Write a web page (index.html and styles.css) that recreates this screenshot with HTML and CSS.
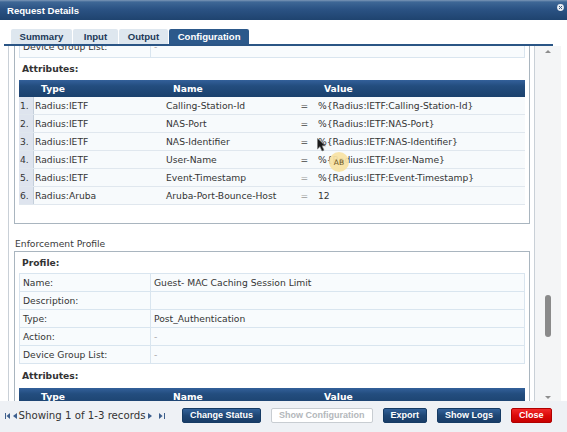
FILE: index.html
```html
<!DOCTYPE html>
<html>
<head>
<meta charset="utf-8">
<link rel="stylesheet" href="styles.css">
</head>
<body>
<div class="dialog">
  <div class="titlebar">
    <span class="title">Request Details</span>
    <svg class="x-icon" width="7" height="7" viewBox="0 0 7 7"><circle cx="3.5" cy="3.5" r="3.4" fill="#e9edf2"/><path d="M2 2 L5 5 M5 2 L2 5" stroke="#3b5a80" stroke-width="1"/></svg>
  </div>
  <div class="tabs">
    <div class="tab">Summary</div>
    <div class="tab tab-narrow">Input</div>
    <div class="tab">Output</div>
    <div class="tab active">Configuration</div>
  </div>
  <div class="main">
    <div class="scroll">
      <div class="scroll-inner">
        <div class="box box-first">
          <div class="kv">
            <div class="kv-row kv-cut"><div class="k">Device Group List:</div><div class="v dim">-</div></div>
          </div>
          <div class="sub">Attributes:</div>
          <div class="attr">
            <div class="attr-head"><span></span><span class="h">Type</span><span class="h">Name</span><span></span><span class="h">Value</span></div>
            <div class="attr-row"><span class="num">1.</span><span class="type">Radius:IETF</span><span class="name">Calling-Station-Id</span><span class="eq">=</span><span class="val">%{Radius:IETF:Calling-Station-Id}</span></div>
            <div class="attr-row"><span class="num">2.</span><span class="type">Radius:IETF</span><span class="name">NAS-Port</span><span class="eq">=</span><span class="val">%{Radius:IETF:NAS-Port}</span></div>
            <div class="attr-row"><span class="num">3.</span><span class="type">Radius:IETF</span><span class="name">NAS-Identifier</span><span class="eq">=</span><span class="val">%{Radius:IETF:NAS-Identifier}</span></div>
            <div class="attr-row"><span class="num">4.</span><span class="type">Radius:IETF</span><span class="name">User-Name</span><span class="eq">=</span><span class="val">%{Radius:IETF:User-Name}</span></div>
            <div class="attr-row"><span class="num">5.</span><span class="type">Radius:IETF</span><span class="name">Event-Timestamp</span><span class="eq light">=</span><span class="val">%{Radius:IETF:Event-Timestamp}</span></div>
            <div class="attr-row"><span class="num">6.</span><span class="type">Radius:Aruba</span><span class="name">Aruba-Port-Bounce-Host</span><span class="eq light">=</span><span class="val">12</span></div>
          </div>
        </div>
        <div class="section-label">Enforcement Profile</div>
        <div class="box">
          <div class="sub sub-profile">Profile:</div>
          <div class="kv kv-top">
            <div class="kv-row"><div class="k">Name:</div><div class="v">Guest- MAC Caching Session Limit</div></div>
            <div class="kv-row"><div class="k">Description:</div><div class="v"></div></div>
            <div class="kv-row"><div class="k">Type:</div><div class="v">Post_Authentication</div></div>
            <div class="kv-row"><div class="k">Action:</div><div class="v dim">-</div></div>
            <div class="kv-row"><div class="k">Device Group List:</div><div class="v dim">-</div></div>
          </div>
          <div class="sub sub-attr">Attributes:</div>
          <div class="attr">
            <div class="attr-head"><span></span><span class="h">Type</span><span class="h">Name</span><span></span><span class="h">Value</span></div>
          </div>
        </div>
      </div>
      <svg class="cursor" width="9" height="14" viewBox="0 0 9 14"><polygon points="0.5,0.5 0.5,11 3,8.6 5,13 7,12.2 5,7.8 8.4,7.8" fill="#1a1a1a" stroke="#777" stroke-width="0.6"/></svg>
      <div class="ab">AB</div>
    </div>
    <div class="vscroll">
      <span class="arrow up"></span>
      <div class="track"><div class="thumb"></div></div>
      <span class="arrow down"></span>
    </div>
  </div>
  <div class="footer">
    <div class="pager">
      <svg class="pg pg-first" width="5" height="6" viewBox="0 0 5 6"><rect x="0" y="0" width="1" height="6" fill="#3d5f8d"/><polygon points="5,0 5,6 1.5,3" fill="#3d5f8d"/></svg>
      <svg class="pg pg-prev" width="4" height="6" viewBox="0 0 4 6"><polygon points="4,0 4,6 0,3" fill="#3d5f8d"/></svg>
      <span class="pg-text">Showing 1 of 1-3 records</span>
      <svg class="pg pg-next" width="4" height="6" viewBox="0 0 4 6"><polygon points="0,0 0,6 4,3" fill="#3d5f8d"/></svg>
      <svg class="pg pg-last" width="6" height="6" viewBox="0 0 6 6"><polygon points="0,0 0,6 3.6,3" fill="#3d5f8d"/><rect x="5" y="0" width="1" height="6" fill="#3d5f8d"/></svg>
    </div>
    <div class="btns">
      <span class="btn">Change Status</span>
      <span class="btn btn-disabled">Show Configuration</span>
      <span class="btn">Export</span>
      <span class="btn">Show Logs</span>
      <span class="btn btn-close">Close</span>
    </div>
  </div>
</div>
</body>
</html>
```

FILE: styles.css
```css
* { box-sizing: border-box; }
html, body { margin: 0; padding: 0; }
body {
  width: 567px;
  height: 432px;
  overflow: hidden;
  background: #fff;
  font-family: "DejaVu Sans", Verdana, sans-serif;
  font-size: 9.2px;
  color: #353535;
}
.dialog { display: flex; flex-direction: column; height: 432px; }

.titlebar {
  height: 20px;
  flex: 0 0 20px;
  display: flex;
  justify-content: space-between;
  align-items: flex-start;
  padding: 0 3px 0 7px;
  background: linear-gradient(to bottom, #7c97b7 0, #3e6796 2px, #2b5384 9px, #1f436f 20px);
}
.title {
  font-family: "Liberation Sans", Arial, sans-serif;
  font-weight: bold;
  font-size: 9.6px;
  color: #fff;
  line-height: 21px;
}
.x-icon { margin-top: 4px; }

.tabs {
  display: flex;
  gap: 1.5px;
  margin: 9px 14px 0 4px;
  padding-left: 7px;
  border-bottom: 2px solid #2a5585;
  flex: 0 0 auto;
}
.tab {
  height: 15px;
  line-height: 15px;
  padding: 0 8.5px;
  background: #dee7ef;
  color: #223a59;
  font-family: "Liberation Sans", Arial, sans-serif;
  font-weight: bold;
  font-size: 9.6px;
  border-radius: 2px 2px 0 0;
}
.tab-narrow { padding: 0 10.5px; }
.tab.active { background: #2c598b; color: #fff; }

.main { display: flex; height: 355px; flex: 0 0 355px; padding-left: 8px; }
.scroll {
  width: 527px;
  border-left: 1px solid #c9d0d7;
  border-right: 1px solid #c9d0d7;
  overflow: hidden;
  position: relative;
}
.scroll-inner { margin-top: -12px; }

.box {
  margin: 0 4px 0 5px;
  border: 1px solid #a9b5bf;
  padding: 0 4px;
}
.box-first { padding-top: 4px; padding-bottom: 18px; }

.kv { border-top: 1px solid #d9e5ef; border-left: 1px solid #d9e5ef; }
.kv-row { display: grid; grid-template-columns: 131px 1fr; height: 18px; }
.k, .v {
  background: #f8fbfd;
  border-right: 1px solid #d9e5ef;
  border-bottom: 1px solid #d9e5ef;
  line-height: 17px;
  white-space: nowrap;
}
.k { padding-left: 3px; }
.v { padding-left: 3px; }
.kv-cut .k, .kv-cut .v { line-height: 13px; }
.dim { color: #a5a5a5; }

.sub { font-weight: bold; line-height: 22px; padding-left: 3px; color: #333; }
.sub-profile { line-height: 21px; }
.sub-attr { line-height: 24px; }

.attr-head, .attr-row {
  display: grid;
  grid-template-columns: 15px 132px 131px 20px 1fr;
  white-space: nowrap;
}
.attr-head {
  height: 17px;
  line-height: 17px;
  background: linear-gradient(to bottom, #33609a 0, #234d7e 6px, #1b416d 17px);
  color: #fff;
  font-weight: bold;
}
.attr-head .h { padding-left: 7px; }
.attr-row {
  height: 18px;
  line-height: 17px;
  background: #f7fafc;
  border-bottom: 1px solid #e0e7ee;
}
.num { background: #dee4ee; border-right: 1px solid #c4cfdb; padding-left: 1px; }
.type { padding-left: 1px; }
.eq { padding-left: 3.5px; color: #444; }
.eq.light { color: #9a9a9a; }
.val { padding-left: 1px; }

.section-label { margin-top: 13px; line-height: 14px; padding-left: 6px; color: #3a3a3a; }

.cursor { position: absolute; left: 308px; top: 92px; }
.ab {
  position: absolute;
  left: 320px;
  top: 106px;
  width: 20px;
  height: 20px;
  border-radius: 50%;
  background: rgba(247, 226, 164, 0.93);
  color: #6c5422;
  font-size: 7.5px;
  display: flex;
  align-items: center;
  justify-content: center;
}

.vscroll {
  width: 26px;
  background: #f4f5f6;
  display: flex;
  flex-direction: column;
  align-items: center;
}
.arrow { width: 0; height: 0; border-left: 3px solid transparent; border-right: 3px solid transparent; }
.arrow.up { border-bottom: 3px solid #8d8d8d; margin-top: 4px; }
.arrow.down { border-top: 3px solid #8d8d8d; margin-bottom: 2px; }
.track { flex: 1; width: 100%; display: flex; justify-content: center; }
.thumb { width: 6px; height: 42px; margin-top: 242px; border-radius: 3px; background: #8a8a8a; }

.footer {
  height: 31px;
  flex: 0 0 31px;
  background: #eef1f5;
  display: flex;
  align-items: center;
  padding: 0 0 2px 5px;
}
.pager { flex: 0 0 177px; display: flex; align-items: center; font-size: 10.2px; color: #333; }
.pg-prev { margin-left: 3px; }
.pg-text { margin-left: 1.5px; }
.pg-next { margin-left: 2px; }
.pg-last { margin-left: 7px; }

.btns { display: flex; gap: 10px; }
.btn {
  height: 15px;
  line-height: 13px;
  padding: 0 7px;
  border: 1px solid #163b64;
  border-radius: 2px;
  background: linear-gradient(to bottom, #33629a 0, #1f4775 50%, #183c67 100%);
  color: #fff;
  font-family: "Liberation Sans", Arial, sans-serif;
  font-weight: bold;
  font-size: 9px;
  white-space: nowrap;
}
.btn-disabled { background: #fff; border-color: #c8cdd2; color: #b3b7bb; }
.btn-close { background: linear-gradient(to bottom, #f22a2a 0, #dc0a0a 50%, #c80000 100%); border-color: #b00000; }
```
